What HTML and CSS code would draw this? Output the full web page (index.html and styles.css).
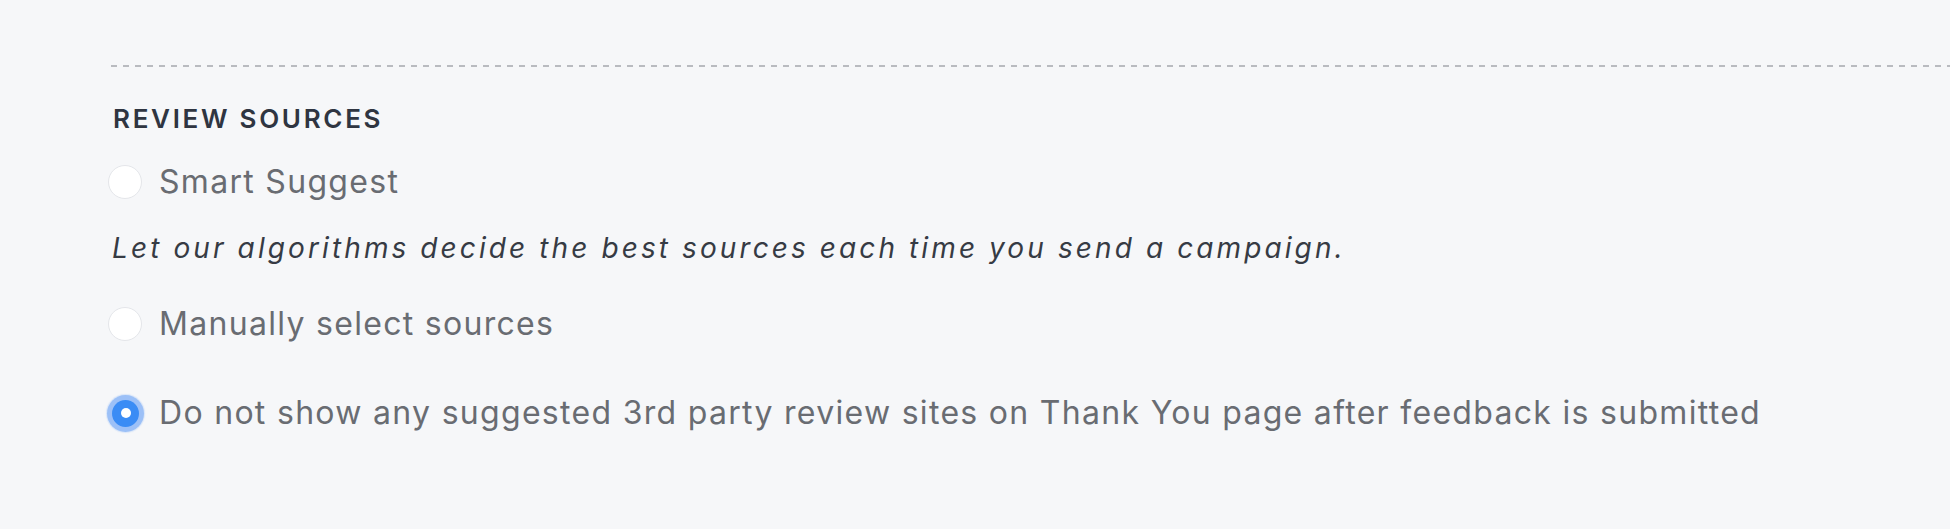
FILE: index.html
```html
<!DOCTYPE html>
<html lang="en">
<head>
<meta charset="utf-8">
<title>Review sources</title>
<link rel="stylesheet" href="styles.css">
</head>
<body>
<section class="panel">
  <div class="divider"></div>
  <h3 class="heading">REVIEW SOURCES</h3>
  <label class="option opt-first">
    <span class="radio"></span>
    <span class="label">Smart Suggest</span>
  </label>
  <p class="desc">Let our algorithms decide the best sources each time you send a campaign.</p>
  <label class="option opt-second">
    <span class="radio"></span>
    <span class="label">Manually select sources</span>
  </label>
  <label class="option opt-third">
    <span class="radio checked"></span>
    <span class="label">Do not show any suggested 3rd party review sites on Thank You page after feedback is submitted</span>
  </label>
</section>
</body>
</html>
```

FILE: styles.css
```css
html, body {
  margin: 0;
  padding: 0;
  background: #f6f7f9;
  height: 100%;
}

body {
  font-family: Inter, "Liberation Sans", sans-serif;
}

.panel {
  display: flex;
  flex-direction: column;
  padding: 65px 0 0 111px;
}

.divider {
  height: 2px;
  background: repeating-linear-gradient(to right, #b9bbc0 0 6px, transparent 6px 12px);
}

.heading {
  margin: 32px 0 0 2px;
  height: 40px;
  line-height: 40px;
  font-size: 26px;
  font-weight: 600;
  color: #2f3541;
  letter-spacing: 2.7px;
}

.option {
  display: flex;
  align-items: center;
  height: 40px;
  margin-left: -3px;
}

.opt-first { margin-top: 23px; }
.opt-second { margin-top: 36px; }
.opt-third { margin-top: 49px; }

.radio {
  box-sizing: border-box;
  flex: none;
  width: 34px;
  height: 34px;
  border-radius: 50%;
  background: #ffffff;
  border: 1px solid #e4e6ea;
  margin-right: 17px;
  position: relative;
}

.radio.checked {
  width: 27px;
  height: 27px;
  margin: 0 20px 0 4px;
  border: none;
  background: #3a8cf5;
  box-shadow: 0 0 0 5px rgba(118, 170, 246, 0.62), 0 0 1px 6px rgba(150, 190, 248, 0.3);
}

.radio.checked::after {
  content: "";
  position: absolute;
  left: 50%;
  top: 50%;
  width: 10px;
  height: 10px;
  margin: -5px 0 0 -5px;
  border-radius: 50%;
  background: #ffffff;
}

.label {
  font-size: 32px;
  line-height: 40px;
  color: #696c72;
  letter-spacing: 1.3px;
  white-space: nowrap;
}

.desc {
  margin: 26px 0 0 1px;
  height: 40px;
  line-height: 40px;
  font-size: 28px;
  font-style: italic;
  color: #363b44;
  letter-spacing: 3.1px;
  white-space: nowrap;
}
```
